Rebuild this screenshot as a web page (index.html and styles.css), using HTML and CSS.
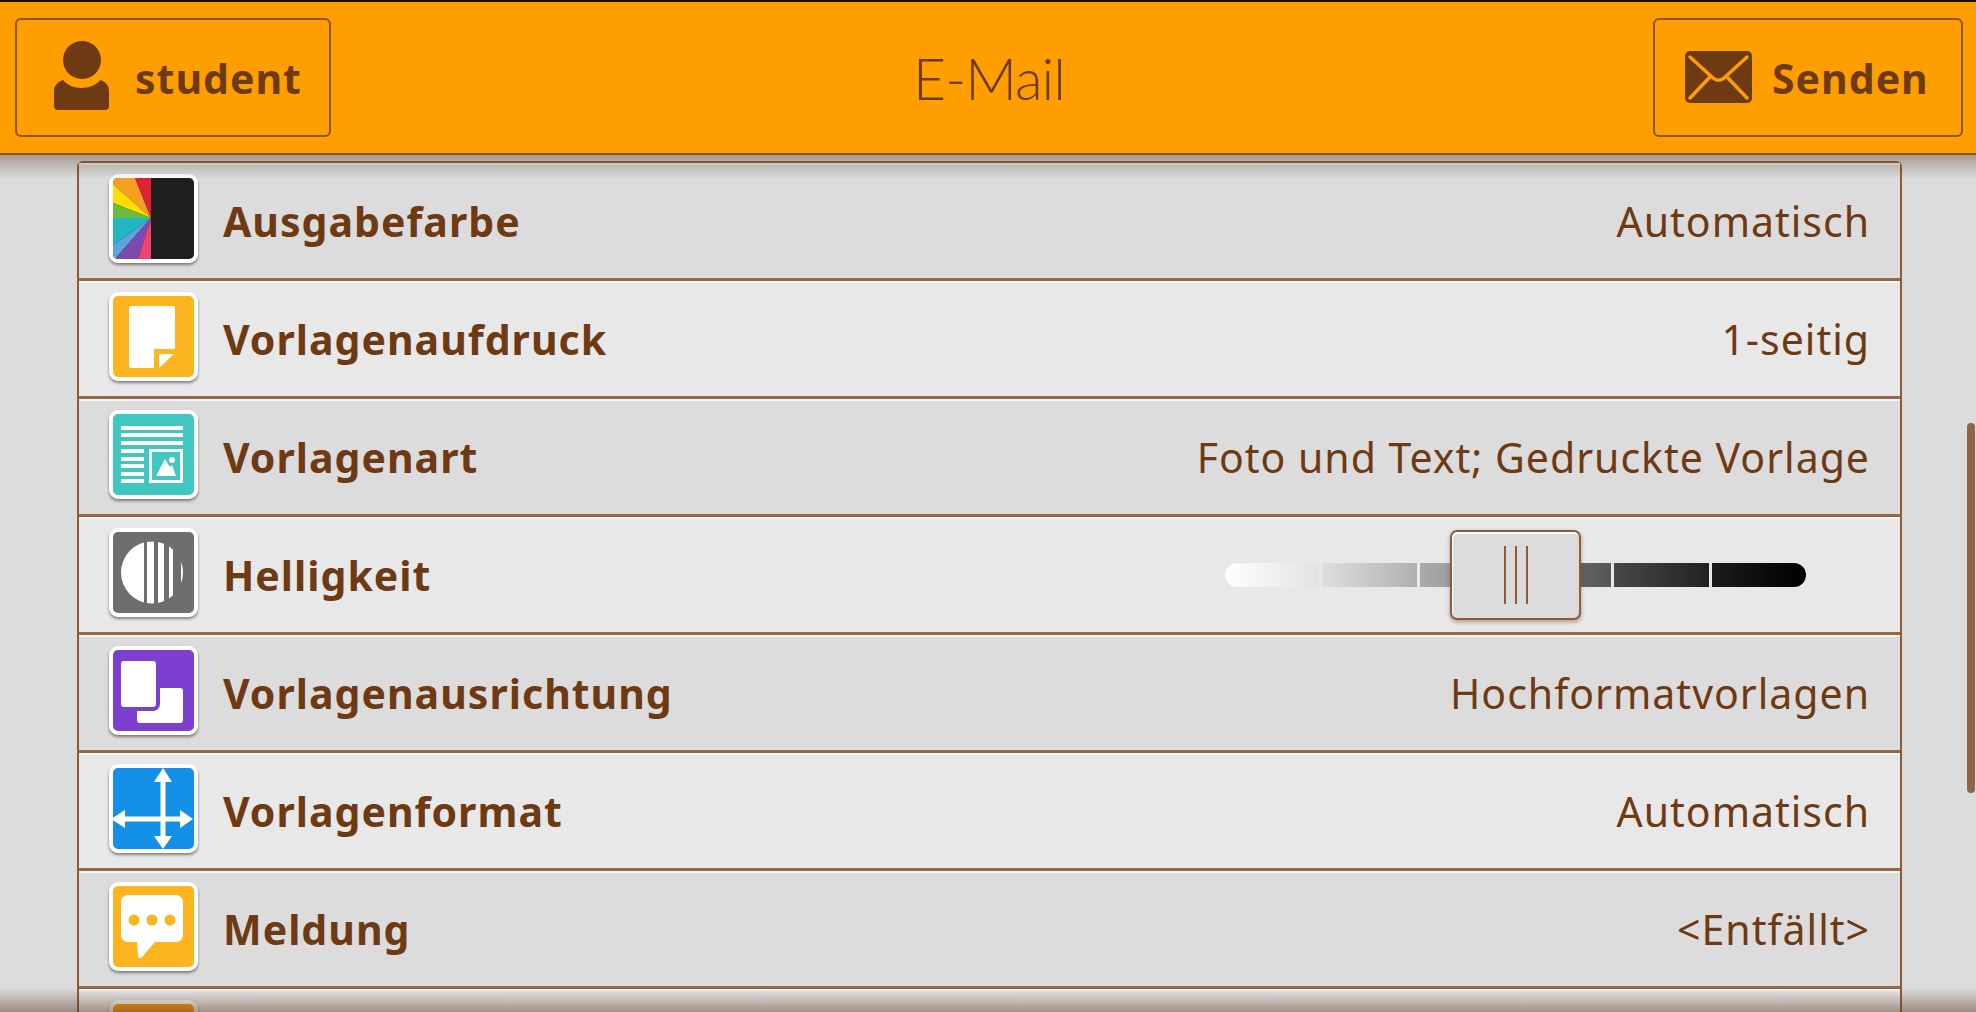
FILE: index.html
```html
<!DOCTYPE html>
<html lang="de">
<head>
    <meta charset="UTF-8">
    <title>E-Mail</title>
    <link rel="stylesheet" href="styles.css">
</head>
<body>
    <header class="topbar">
        <div class="bar-left">
            <button class="bar-btn user-btn">
                <svg class="user-icon" viewBox="0 0 55 69"><ellipse cx="28" cy="19" rx="19" ry="19"/><path d="M9 39c4 5 11 8 18.500 8s14.500-3 19-8c5 2 8.500 5 8.500 11v15c0 2-1 4-4 4H4c-3 0-4-2-4-4V50c0-6 4-9 9-11z"/></svg>
                <span>student</span>
            </button>
        </div>
        <h1 class="title">E-Mail</h1>
        <div class="bar-right">
            <button class="bar-btn send-btn">
                <svg class="mail-icon" viewBox="0 0 67 52"><rect width="67" height="52" rx="5" fill="#6e3a14"/><path d="M5 6l23 21c3 3 8 3 11 0L62 6M5 47l19-20M62 47L43 27" fill="none" stroke="#ff9e00" stroke-width="3.500" stroke-linecap="round"/></svg>
                <span>Senden</span>
            </button>
        </div>
    </header>

    <div class="top-shade"></div>

    <main class="list">
        <div class="row">
            <div class="icon">
                <svg viewBox="0 0 81 81">
                    <rect width="81" height="81" fill="#1e1e1e"/>
                    <path d="M38 40L0 6V0H22z" fill="#f5a023"/>
                    <path d="M38 40L22 0H38z" fill="#dd2233"/>
                    <path d="M38 40L0 6V25z" fill="#ffdd00"/>
                    <path d="M38 40L0 25V40z" fill="#6cbb3c"/>
                    <path d="M38 40L0 40V67z" fill="#20b8c0"/>
                    <path d="M38 40L0 67V81H2z" fill="#5aa5e0"/>
                    <path d="M38 40L2 81H25z" fill="#7a4ab0"/>
                    <path d="M38 40L25 81H38z" fill="#f0446e"/>
                </svg>
            </div>
            <span class="label">Ausgabefarbe</span>
            <span class="value">Automatisch</span>
        </div>
        <div class="row">
            <div class="icon amber">
                <svg viewBox="0 0 81 81">
                    <rect x="16" y="10" width="46" height="62" rx="2" fill="#fff"/>
                    <rect x="41" y="53" width="22" height="20" fill="#fdb51f"/>
                    <path d="M46 58H61L46 72z" fill="#fff"/>
                </svg>
            </div>
            <span class="label">Vorlagenaufdruck</span>
            <span class="value">1-seitig</span>
        </div>
        <div class="row">
            <div class="icon teal">
                <svg viewBox="0 0 81 81" fill="#fff">
                    <rect x="8" y="12" width="62" height="4"/>
                    <rect x="8" y="19" width="62" height="4"/>
                    <rect x="8" y="27" width="62" height="4"/>
                    <rect x="8" y="35" width="23" height="4"/>
                    <rect x="8" y="43" width="23" height="4"/>
                    <rect x="8" y="50" width="23" height="4"/>
                    <rect x="8" y="58" width="23" height="4"/>
                    <rect x="8" y="65" width="23" height="4"/>
                    <rect x="37.500" y="36.500" width="31" height="31" fill="none" stroke="#fff" stroke-width="3"/>
                    <path d="M43 62L52 45l5 8 2-2 4 11z"/>
                    <circle cx="59" cy="46" r="3"/>
                </svg>
            </div>
            <span class="label">Vorlagenart</span>
            <span class="value">Foto und Text; Gedruckte Vorlage</span>
        </div>
        <div class="row">
            <div class="icon grey">
                <svg viewBox="0 0 81 81" fill="#fff">
                    <clipPath id="disc"><circle cx="39" cy="40.500" r="31"/></clipPath>
                    <g clip-path="url(#disc)">
                        <rect x="8" y="9" width="23" height="63"/>
                        <rect x="34" y="9" width="7" height="63"/>
                        <rect x="45" y="9" width="6" height="63"/>
                        <rect x="56" y="9" width="4" height="63"/>
                        <rect x="68" y="9" width="3" height="63"/>
                    </g>
                </svg>
            </div>
            <span class="label">Helligkeit</span>
            <div class="slider">
                <div class="track">
                    <i></i><i></i><i></i><i></i><i></i><i></i>
                </div>
                <div class="thumb"><b></b><b></b><b></b></div>
            </div>
        </div>
        <div class="row">
            <div class="icon purple">
                <svg viewBox="0 0 81 81" fill="#fff">
                    <rect x="24" y="38" width="46" height="35" rx="3"/>
                    <rect x="6" y="9" width="39" height="50" rx="5" stroke="#7d3fcf" stroke-width="4"/>
                </svg>
            </div>
            <span class="label">Vorlagenausrichtung</span>
            <span class="value">Hochformatvorlagen</span>
        </div>
        <div class="row">
            <div class="icon blue">
                <svg viewBox="0 0 81 81" fill="#fff">
                    <rect x="47.500" y="8" width="5" height="64"/>
                    <rect x="8" y="48.500" width="64" height="5"/>
                    <path d="M50 0l9 14H41zM50 81l-9-13h18zM-2 51l14-9v18zM80 51l-13 9V42z"/>
                </svg>
            </div>
            <span class="label">Vorlagenformat</span>
            <span class="value">Automatisch</span>
        </div>
        <div class="row">
            <div class="icon amber">
                <svg viewBox="0 0 81 81">
                    <path d="M15 9h48c4 0 7 3 7 7v33c0 4-3 7-7 7H42L29 71c-2 2-4 1-4-1l-1-14h-9c-4 0-7-3-7-7V16c0-4 3-7 7-7z" fill="#fff"/>
                    <circle cx="21" cy="34" r="5.500" fill="#fdb51f"/>
                    <circle cx="39" cy="34" r="5.500" fill="#fdb51f"/>
                    <circle cx="57" cy="34" r="5.500" fill="#fdb51f"/>
                </svg>
            </div>
            <span class="label">Meldung</span>
            <span class="value">&lt;Entfällt&gt;</span>
        </div>
        <div class="row">
            <div class="icon orange"></div>
        </div>
    </main>

    <div class="bottom-shade"></div>
    <div class="scrollbar"></div>
</body>
</html>
```

FILE: styles.css
```css
* {
    box-sizing: border-box;
}

html, body {
    height: 100%;
    overflow: hidden;
}

body {
    margin: 0;
    background-color: #dcdcdc;
    color: #6e3a14;
    font-family: "Noto Sans", Lato, sans-serif;
}

.topbar {
    display: grid;
    grid-template-columns: 1fr auto 1fr;
    align-items: center;
    height: 155px;
    padding: 0 13px 0 15px;
    background-color: #ff9e00;
    border-top: 2px solid #1a1000;
    border-bottom: 2px solid #8a5518;
}

.bar-right {
    display: flex;
    justify-content: flex-end;
}

.title {
    margin: 0;
    font-family: Lato, sans-serif;
    font-size: 57px;
    font-weight: 300;
    letter-spacing: -1px;
}

.bar-btn {
    display: flex;
    align-items: center;
    height: 119px;
    background: none;
    border: 2px solid #8a5518;
    border-radius: 6px;
    color: #6e3a14;
    font-family: inherit;
    font-size: 41px;
    font-weight: 700;
    letter-spacing: 1px;
}

.user-btn {
    width: 316px;
    padding: 0 0 0 37px;
    gap: 26px;
}

.send-btn {
    width: 310px;
    padding: 0 0 0 30px;
    gap: 20px;
}

.user-icon {
    width: 55px;
    height: 69px;
    margin-bottom: 4px;
    fill: #6e3a14;
}

.mail-icon {
    width: 67px;
    height: 52px;
    margin-bottom: 2px;
}

.list {
    margin: 6px 74px 0 77px;
    border: 2px solid #8f5a35;
    border-bottom: none;
    border-radius: 6px 6px 0 0;
}

.row {
    display: flex;
    align-items: center;
    height: 118px;
    padding: 0 30px;
    border-bottom: 3px solid #96684a;
    box-shadow: inset 0 2px 0 #f6f6f6;
    background-color: #e8e8e8;
}

.row:nth-child(odd) {
    background-color: #dcdcdc;
}

.icon {
    flex: none;
    width: 89px;
    height: 89px;
    margin-bottom: 5px;
    border: 4px solid #fff;
    border-radius: 9px;
    box-shadow: 0 2px 3px rgba(0, 0, 0, 0.45);
    overflow: hidden;
}

.icon svg {
    display: block;
    width: 81px;
    height: 81px;
}

.amber { background-color: #fdb51f; }
.teal { background-color: #40c8c0; }
.grey { background-color: #6e6e6e; }
.purple { background-color: #7d3fcf; }
.blue { background-color: #1490e8; }
.orange { background-color: #ff9a05; }

.label {
    margin-left: 25px;
    font-size: 41px;
    font-weight: 700;
    letter-spacing: 1px;
}

.value {
    margin-left: auto;
    font-size: 41px;
    letter-spacing: 1px;
}

/* brightness slider */
.slider {
    position: relative;
    display: flex;
    align-items: center;
    margin-left: auto;
    margin-right: 64px;
    width: 581px;
    height: 90px;
}

.track {
    display: flex;
    gap: 3px;
    width: 100%;
    height: 24px;
    border-radius: 12px;
    overflow: hidden;
}

.track i {
    flex: 1;
}

.track i:nth-child(1) { background: linear-gradient(90deg, #fff, #e2e2e2); }
.track i:nth-child(2) { background: linear-gradient(90deg, #dedede, #b0b0b0); }
.track i:nth-child(3) { background: linear-gradient(90deg, #aaa, #888); }
.track i:nth-child(4) { background: linear-gradient(90deg, #808080, #555); }
.track i:nth-child(5) { background: linear-gradient(90deg, #484848, #222); }
.track i:nth-child(6) { background: linear-gradient(90deg, #1c1c1c, #000); }

.thumb {
    position: absolute;
    left: 225px;
    top: 0;
    display: flex;
    align-items: center;
    justify-content: center;
    gap: 9px;
    width: 131px;
    height: 90px;
    background-color: #dcdcdc;
    border: 2px solid #8f5a35;
    border-radius: 7px;
    box-shadow: inset 1px 2px 0 #fff, 0 2px 4px rgba(80, 40, 10, 0.4);
}

.thumb b {
    width: 2px;
    height: 58px;
    background-color: #8f5a35;
}

/* shadows thrown by the top bar and the bottom edge */
.top-shade {
    position: absolute;
    top: 155px;
    left: 0;
    right: 0;
    height: 24px;
    background: linear-gradient(rgba(90, 60, 40, 0.4), rgba(90, 60, 40, 0));
}

.bottom-shade {
    position: absolute;
    bottom: 0;
    left: 0;
    right: 0;
    height: 24px;
    background: linear-gradient(rgba(90, 60, 40, 0), rgba(90, 60, 40, 0.5));
}

.scrollbar {
    position: absolute;
    top: 423px;
    right: 1px;
    width: 8px;
    height: 370px;
    background-color: #8f6548;
    border-radius: 4px;
}
```
